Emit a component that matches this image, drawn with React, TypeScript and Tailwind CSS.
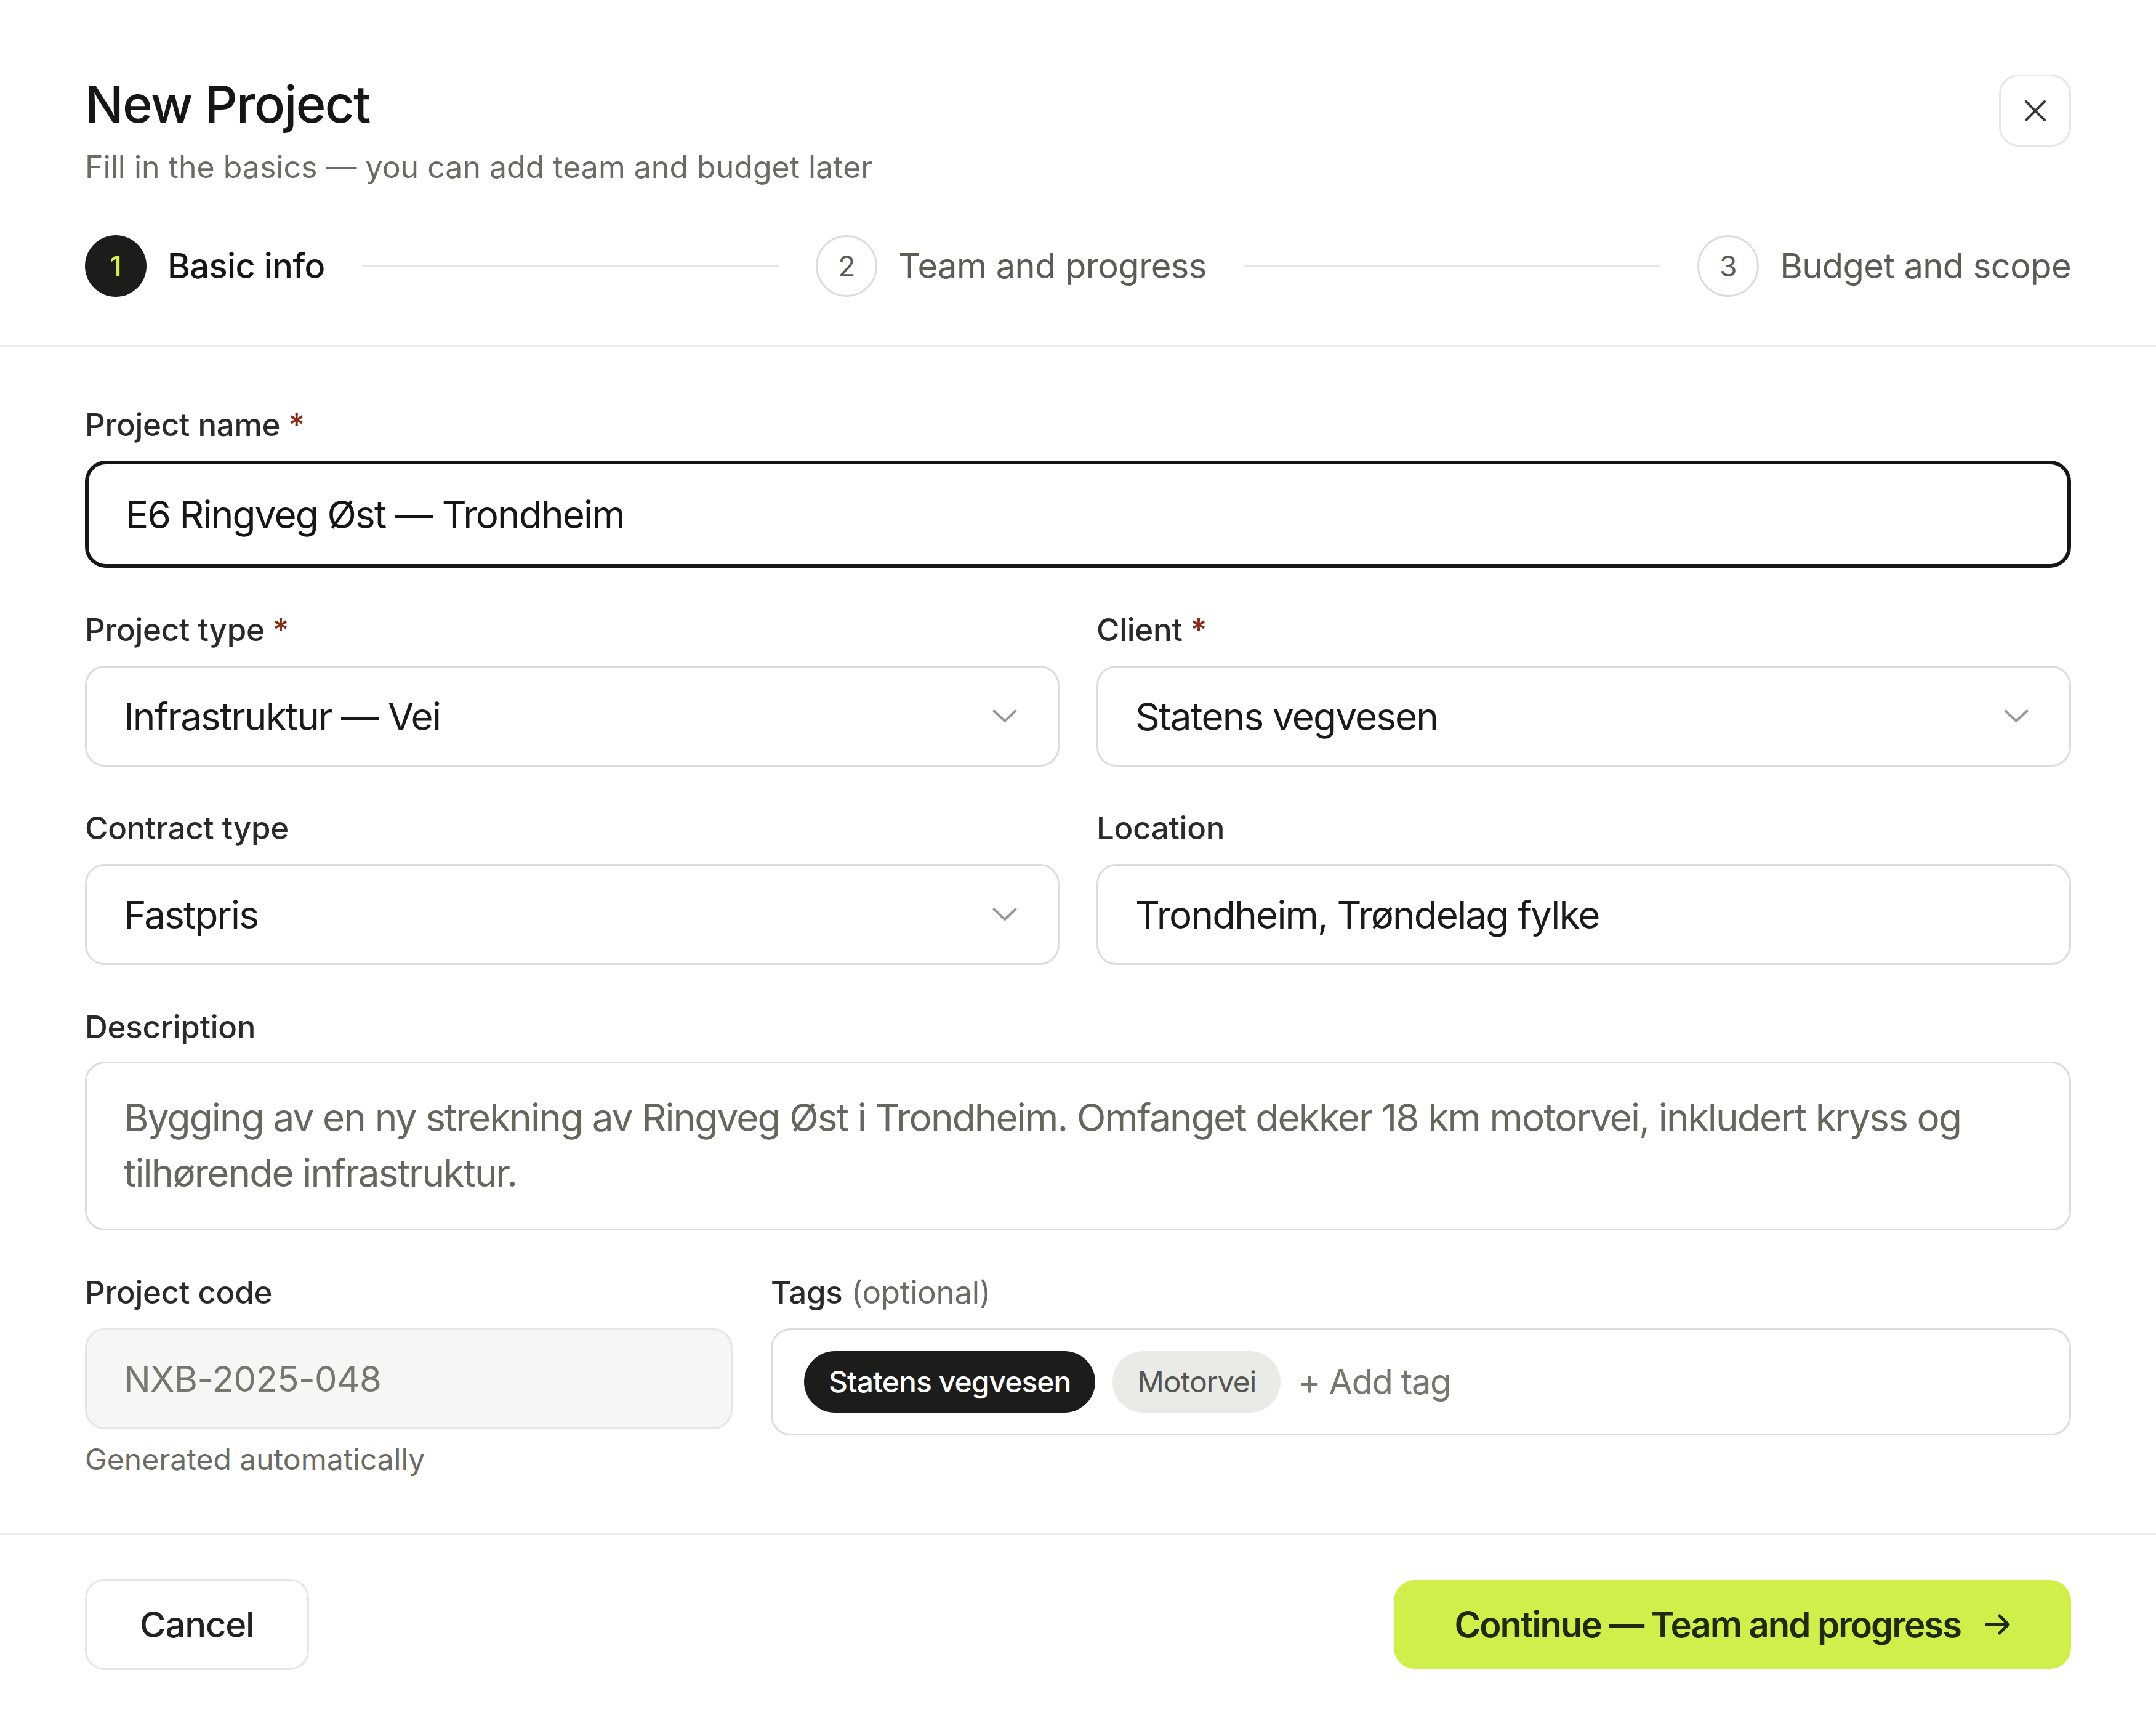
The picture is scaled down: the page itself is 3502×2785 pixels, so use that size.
import React from 'react';

const steps = [
  { n: 1, label: 'Basic info', active: true },
  { n: 2, label: 'Team and progress', active: false },
  { n: 3, label: 'Budget and scope', active: false },
];

function Chevron() {
  return (
    <svg width="40" height="22" viewBox="0 0 40 22" fill="none" className="shrink-0">
      <path d="M2.5 2.5 L20 19 L37.5 2.5" stroke="#9a9a92" strokeWidth="4" strokeLinecap="round" strokeLinejoin="round" />
    </svg>
  );
}

function Label({ text, required, optional }: { text: string; required?: boolean; optional?: string }) {
  return (
    <div className="text-[51px] leading-[70px] font-medium text-[#2a2a27] tracking-[-0.005em]">
      {text}
      {required && <span className="text-[#8a2b17] font-semibold"> *</span>}
      {optional && <span className="text-[#6b6b63] font-normal"> {optional}</span>}
    </div>
  );
}

function SelectBox({ value }: { value: string }) {
  return (
    <div className="h-[164px] rounded-[32px] border-[3px] border-[#dcdcd8] bg-white flex items-center justify-between pl-[60px] pr-[66px]">
      <span className="text-[62px] text-[#1a1a18] tracking-[-0.03em]">{value}</span>
      <Chevron />
    </div>
  );
}

export default function App() {
  return (
    <div className="w-[3502px] min-h-[2785px] bg-white flex flex-col font-['Inter',sans-serif] text-[#1a1a18]">
      {/* header */}
      <div className="px-[138px] pt-[120px] pb-[78px] border-b-[3px] border-[#ededeb]">
        <div className="flex items-start justify-between">
          <div>
            <h1 className="text-[83px] leading-[98px] font-medium tracking-[-0.02em] text-[#161614]">New Project</h1>
            <p className="mt-[18px] text-[50px] leading-[70px] text-[#6b6b63] tracking-[0em]">
              Fill in the basics — you can add team and budget later
            </p>
          </div>
          <button className="mt-[1px] w-[117px] h-[117px] rounded-[32px] border-[3px] border-[#e6e6e3] flex items-center justify-center">
            <svg width="34" height="34" viewBox="0 0 34 34" fill="none">
              <path d="M2 2 L32 32 M32 2 L2 32" stroke="#3a3a36" strokeWidth="4" strokeLinecap="round" />
            </svg>
          </button>
        </div>

        {/* stepper */}
        <div className="mt-[76px] flex items-center h-[100px]">
          {steps.map((s, i) => (
            <React.Fragment key={s.n}>
              {i > 0 && <div className="flex-1 h-[3px] bg-[#e6e6e3] mx-[60px]" />}
              <div className="flex items-center gap-[34px]">
                {s.active ? (
                  <div className="w-[100px] h-[100px] rounded-full bg-[#1c1c1a] flex items-center justify-center text-[46px] font-medium text-[#d4f24d]">
                    {s.n}
                  </div>
                ) : (
                  <div className="w-[100px] h-[100px] rounded-full border-[3px] border-[#dcdcd8] flex items-center justify-center text-[46px] text-[#5c5c55]">
                    {s.n}
                  </div>
                )}
                <span className={`text-[56px] tracking-[-0.01em] ${s.active ? 'text-[#161614] font-medium' : 'text-[#5c5c55]'}`}>
                  {s.label}
                </span>
              </div>
            </React.Fragment>
          ))}
        </div>
      </div>

      {/* form body */}
      <div className="flex-1 px-[138px] pt-[92px] pb-[78px] flex flex-col gap-[66px]">
        <div className="flex flex-col gap-[23px]">
          <Label text="Project name" required />
          <div className="h-[174px] rounded-[34px] border-[6px] border-[#161614] bg-white flex items-center px-[60px]">
            <span className="text-[62px] text-[#161614] tracking-[-0.03em]">E6 Ringveg Øst — Trondheim</span>
          </div>
        </div>

        <div className="grid grid-cols-2 gap-x-[60px] gap-y-[65px]">
          <div className="flex flex-col gap-[23px]">
            <Label text="Project type" required />
            <SelectBox value="Infrastruktur — Vei" />
          </div>
          <div className="flex flex-col gap-[23px]">
            <Label text="Client" required />
            <SelectBox value="Statens vegvesen" />
          </div>
          <div className="flex flex-col gap-[23px]">
            <Label text="Contract type" />
            <SelectBox value="Fastpris" />
          </div>
          <div className="flex flex-col gap-[23px]">
            <Label text="Location" />
            <div className="h-[164px] rounded-[32px] border-[3px] border-[#dcdcd8] bg-white flex items-center px-[60px]">
              <span className="text-[62px] text-[#1a1a18] tracking-[-0.03em]">Trondheim, Trøndelag fylke</span>
            </div>
          </div>
        </div>

        <div className="flex flex-col gap-[21px]">
          <Label text="Description" />
          <div className="rounded-[32px] border-[3px] border-[#dcdcd8] bg-white px-[60px] pt-[43px] pb-[45px]">
            <p className="text-[62px] leading-[90px] text-[#66665e] tracking-[-0.03em]">
              Bygging av en ny strekning av Ringveg Øst i Trondheim. Omfanget dekker 18 km motorvei, inkludert kryss og tilhørende infrastruktur.
            </p>
          </div>
        </div>

        <div className="grid grid-cols-[1052px_1fr] gap-x-[62px]">
          <div className="flex flex-col">
            <Label text="Project code" />
            <div className="mt-[23px] h-[164px] rounded-[32px] border-[3px] border-[#e6e6e3] bg-[#f6f6f4] flex items-center px-[60px]">
              <span className="text-[58px] text-[#77776f] tracking-[-0.01em]">NXB-2025-048</span>
            </div>
            <span className="mt-[19px] text-[48px] leading-[60px] text-[#6b6b63] tracking-[0em]">Generated automatically</span>
          </div>
          <div className="flex flex-col">
            <Label text="Tags" optional="(optional)" />
            <div className="mt-[23px] h-[174px] rounded-[32px] border-[3px] border-[#dcdcd8] bg-white flex items-center gap-[28px] px-[51px]">
              <span className="h-[100px] rounded-full bg-[#1c1c1a] text-white text-[48px] font-medium px-[40px] flex items-center tracking-[-0.02em]">
                Statens vegvesen
              </span>
              <span className="h-[100px] rounded-full bg-[#eaeae7] text-[#55554f] text-[48px] px-[40px] flex items-center tracking-[-0.02em]">
                Motorvei
              </span>
              <span className="text-[56px] text-[#77776f] tracking-[-0.025em]">+ Add tag</span>
            </div>
          </div>
        </div>
      </div>

      {/* footer */}
      <div className="border-t-[3px] border-[#ededeb] px-[138px] pt-[71px] pb-[73px] flex items-center justify-between">
        <button className="h-[148px] px-[86px] rounded-[32px] border-[3px] border-[#e6e6e3] bg-white text-[58px] font-medium text-[#222220] tracking-[-0.02em]">
          Cancel
        </button>
        <button className="h-[144px] px-[98px] rounded-[34px] bg-[#cff04b] flex items-center gap-[39px] text-[58px] font-semibold text-[#1f2a0e] tracking-[-0.035em]">
          Continue — Team and progress
          <svg width="42" height="34" viewBox="0 0 42 34" fill="none">
            <path d="M3 17 H38 M24 3 L38 17 L24 31" stroke="#1f2a0e" strokeWidth="5" strokeLinecap="round" strokeLinejoin="round" />
          </svg>
        </button>
      </div>
    </div>
  );
}
